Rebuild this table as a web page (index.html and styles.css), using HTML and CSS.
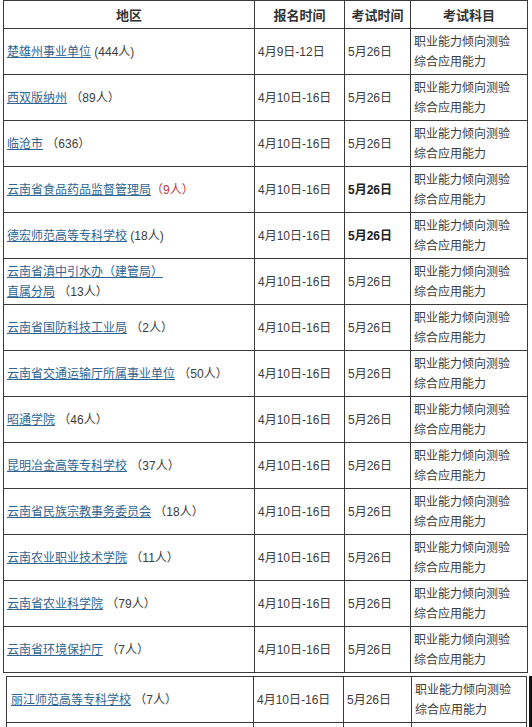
FILE: index.html
```html
<!DOCTYPE html>
<html lang="zh-CN">
<head>
<meta charset="utf-8">
<title>招聘考试时间表</title>
<link rel="stylesheet" href="styles.css">
</head>
<body>
<div class="main">
<table class="grid">
  <colgroup>
    <col class="c1"><col class="c2"><col class="c3"><col class="c4">
  </colgroup>
  <thead>
    <tr class="head"><th>地区</th><th>报名时间</th><th>考试时间</th><th>考试科目</th></tr>
  </thead>
  <tbody>
    <tr><td><a href="#">楚雄州事业单位</a> (444人)</td><td>4月9日-12日</td><td>5月26日</td><td class="subj">职业能力倾向测验<br>综合应用能力</td></tr>
    <tr><td><a href="#">西双版纳州</a> （89人）</td><td>4月10日-16日</td><td>5月26日</td><td class="subj">职业能力倾向测验<br>综合应用能力</td></tr>
    <tr><td><a href="#">临沧市</a> （636）</td><td>4月10日-16日</td><td>5月26日</td><td class="subj">职业能力倾向测验<br>综合应用能力</td></tr>
    <tr><td><a href="#">云南省食品药品监督管理局</a><span class="red">（9人）</span></td><td>4月10日-16日</td><td class="strong">5月26日</td><td class="subj">职业能力倾向测验<br>综合应用能力</td></tr>
    <tr><td><a href="#">德宏师范高等专科学校</a> (18人)</td><td>4月10日-16日</td><td class="strong">5月26日</td><td class="subj">职业能力倾向测验<br>综合应用能力</td></tr>
    <tr><td class="two"><a href="#">云南省滇中引水办（建管局）<br>直属分局</a> （13人）</td><td>4月10日-16日</td><td>5月26日</td><td class="subj">职业能力倾向测验<br>综合应用能力</td></tr>
    <tr><td><a href="#">云南省国防科技工业局</a> （2人）</td><td>4月10日-16日</td><td>5月26日</td><td class="subj">职业能力倾向测验<br>综合应用能力</td></tr>
    <tr><td><a href="#">云南省交通运输厅所属事业单位</a> （50人）</td><td>4月10日-16日</td><td>5月26日</td><td class="subj">职业能力倾向测验<br>综合应用能力</td></tr>
    <tr><td><a href="#">昭通学院</a> （46人）</td><td>4月10日-16日</td><td>5月26日</td><td class="subj">职业能力倾向测验<br>综合应用能力</td></tr>
    <tr><td><a href="#">昆明冶金高等专科学校</a> （37人）</td><td>4月10日-16日</td><td>5月26日</td><td class="subj">职业能力倾向测验<br>综合应用能力</td></tr>
    <tr><td><a href="#">云南省民族宗教事务委员会</a> （18人）</td><td>4月10日-16日</td><td>5月26日</td><td class="subj">职业能力倾向测验<br>综合应用能力</td></tr>
    <tr><td><a href="#">云南农业职业技术学院</a> （11人）</td><td>4月10日-16日</td><td>5月26日</td><td class="subj">职业能力倾向测验<br>综合应用能力</td></tr>
    <tr><td><a href="#">云南省农业科学院</a> （79人）</td><td>4月10日-16日</td><td>5月26日</td><td class="subj">职业能力倾向测验<br>综合应用能力</td></tr>
    <tr><td><a href="#">云南省环境保护厅</a> （7人）</td><td>4月10日-16日</td><td>5月26日</td><td class="subj">职业能力倾向测验<br>综合应用能力</td></tr>
  </tbody>
</table>
</div>
<div class="second">
<table class="grid grid2">
  <colgroup>
    <col class="d1"><col class="d2"><col class="d3"><col class="d4">
  </colgroup>
  <tbody>
    <tr><td><a href="#">丽江师范高等专科学校</a> （7人）</td><td>4月10日-16日</td><td>5月26日</td><td class="subj">职业能力倾向测验<br>综合应用能力</td></tr>
    <tr><td>&nbsp;</td><td>&nbsp;</td><td>&nbsp;</td><td class="subj">&nbsp;</td></tr>
  </tbody>
</table>
</div>
</body>
</html>
```
FILE: styles.css
```css
html, body {
  margin: 0;
  padding: 0;
  background: #ffffff;
}
body {
  width: 532px;
  height: 727px;
  overflow: hidden;
  font-family: "Liberation Sans", "Noto Sans CJK SC", sans-serif;
  font-size: 12px;
  color: #3c3c3c;
}
.main {
  padding-left: 3px;
}
.grid {
  border-collapse: collapse;
  table-layout: fixed;
  width: 524px;
}
.grid th,
.grid td {
  border: 1px solid #3a3a3a;
  padding: 0 3px;
  vertical-align: middle;
  text-align: left;
  line-height: 20px;
  white-space: nowrap;
  overflow: hidden;
}
.c1 { width: 251px; }
.c2 { width: 90px; }
.c3 { width: 66px; }
.c4 { width: 117px; }
.head th {
  height: 27px;
  text-align: center;
  font-size: 13px;
  font-weight: bold;
  color: #333333;
  font-family: "Noto Sans CJK SC", sans-serif;
}
.grid tbody tr {
  height: 46px;
}
.grid tbody td {
  height: 46px;
  box-sizing: border-box;
}
.grid a {
  color: #2f6590;
  text-decoration: underline;
}
.red {
  color: #b83a3a;
}
.strong {
  font-weight: bold;
  color: #222222;
}
.subj {
  padding-left: 4px;
}
.second {
  margin-top: 3px;
  padding-left: 6px;
  padding-right: 3px;
  border-right: 3px solid #111111;
  width: 520px;
}
.grid2 {
  width: 520px;
}
.d1 { width: 247px; }
.d2 { width: 90px; }
.d3 { width: 68px; }
.d4 { width: 115px; }
.grid2 td:first-child {
  padding-left: 4px;
}
```
